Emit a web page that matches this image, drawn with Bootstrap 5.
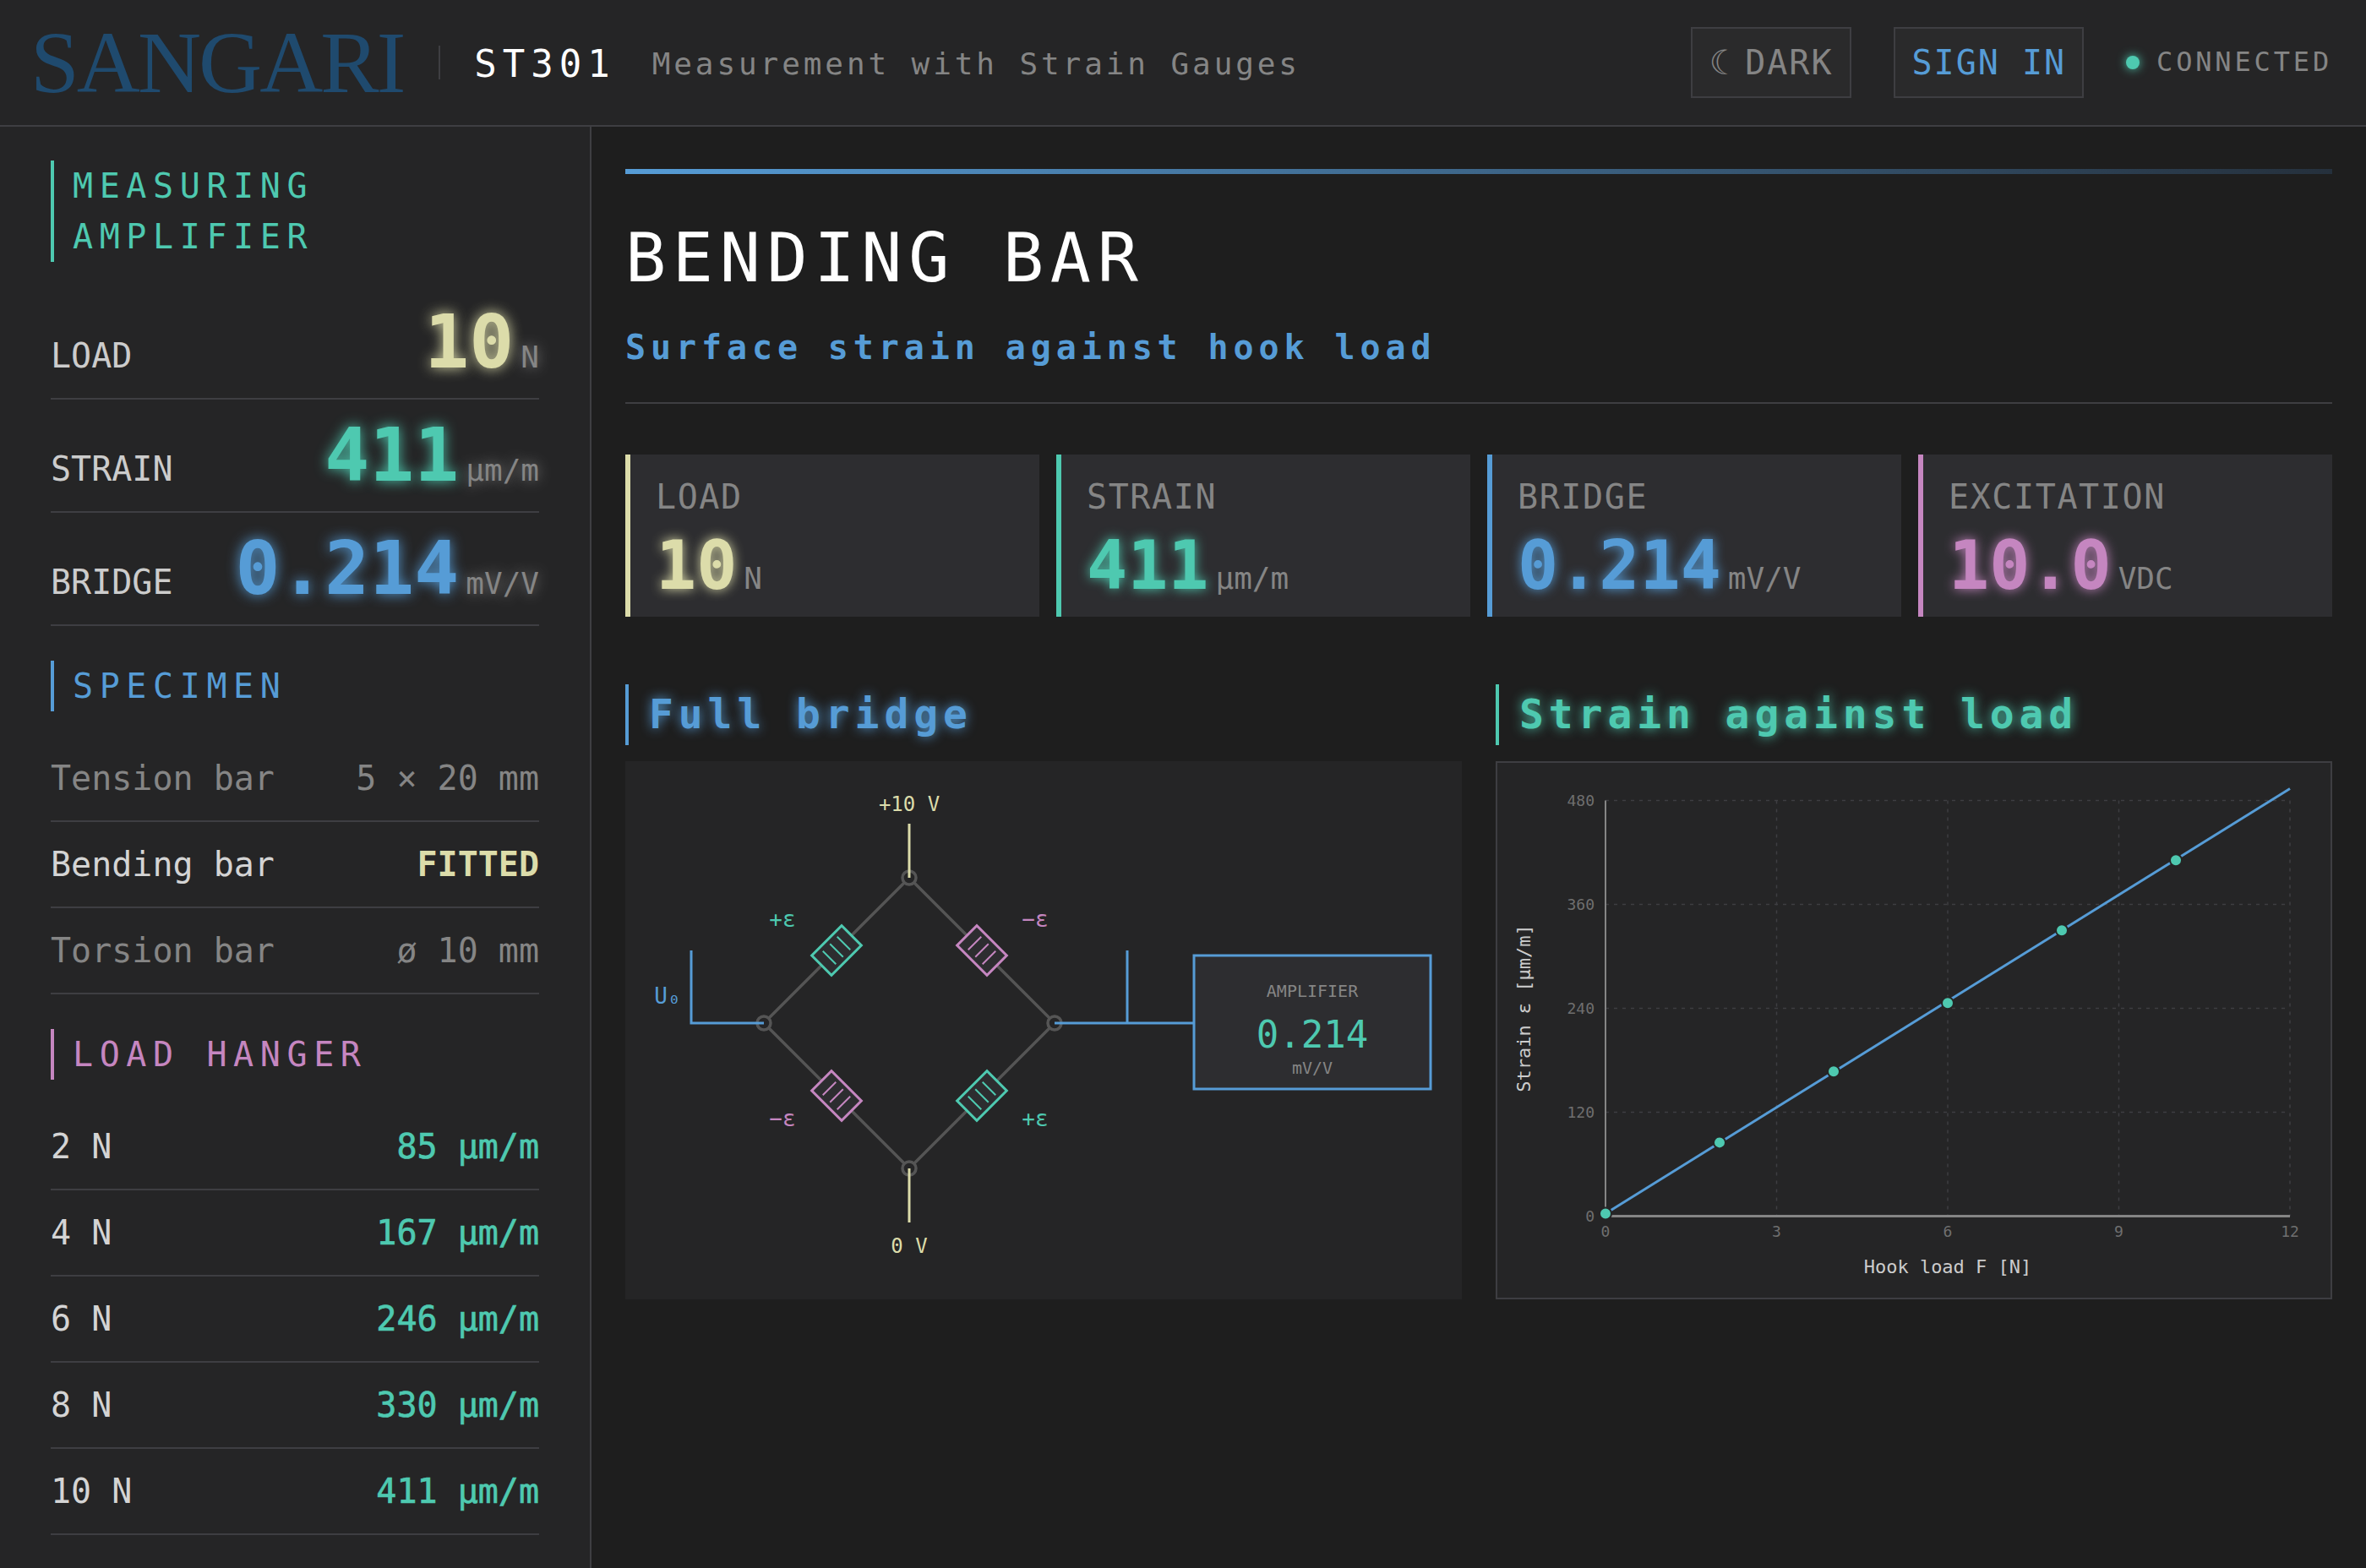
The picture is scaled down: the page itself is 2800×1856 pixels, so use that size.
<!DOCTYPE html>
<html lang="en">
  <head>
    <meta charset="utf-8" />
    <title>ST301 Measurement with Strain Gauges</title>
    <link href="https://cdn.jsdelivr.net/npm/bootstrap@5.3.3/dist/css/bootstrap.min.css" rel="stylesheet" />
    <script src="https://cdn.jsdelivr.net/npm/bootstrap@5.3.3/dist/js/bootstrap.bundle.min.js"></script>
    <style>
      :root {
        --teal: #4ec9b0;
        --blue: #569cd6;
        --yellow: #dcdcaa;
        --pink: #c586c0;
        --muted: #858585;
        --line: #3e3e42;
      }
      html, body { height: 100%; }
      body {
        background: #1e1e1e;
        color: #d4d4d4;
        font-family: "DejaVu Sans Mono", monospace;
        font-size: 40px;
      }
      .top-bar {
        height: 150px;
        background: #252526;
        border-bottom: 2px solid var(--line);
        padding: 0 40px 0 36px;
      }
      .brand-name {
        font-family: "Liberation Serif", serif;
        font-size: 104px;
        letter-spacing: -3px;
        line-height: 1;
        color: #1f4a6e;
      }
      .brand-rule { width: 2px; height: 40px; background: var(--line); margin: 0 40px 0 42px; }
      .code-name { font-size: 44px; letter-spacing: 7px; color: #fff; line-height: 1; margin-right: 43px; padding-top: 4px; }
      .sub-name { font-size: 36px; letter-spacing: 3.9px; color: var(--muted); line-height: 1; padding-top: 4px; }
      .bar-btn {
        height: 84px;
        border: 2px solid var(--line);
        border-radius: 0;
        background: #2a2a2b;
        color: var(--muted);
        font-size: 40px;
        letter-spacing: 2px;
        word-spacing: -10px;
        padding: 0 20px;
        line-height: 1;
      }
      .bar-btn.sign { color: var(--blue); margin-left: 50px; margin-right: 50px; word-spacing: 0; padding: 0 19px; }
      .live-dot { width: 16px; height: 16px; border-radius: 50%; background: var(--teal); box-shadow: 0 0 12px var(--teal); margin-right: 20px; }
      .live-text { font-size: 32px; letter-spacing: 3.84px; color: var(--muted); line-height: 1; padding-bottom: 3px; }

      .side-col {
        width: 700px;
        flex: none;
        background: #252526;
        border-right: 2px solid var(--line);
        padding: 40px 60px 0;
      }
      .side-head {
        border-left: 4px solid currentColor;
        padding-left: 22px;
        font-size: 40px;
        letter-spacing: 7.6px;
        line-height: 60px;
        margin-bottom: 29px;
        font-weight: 400;
      }
      .read-row {
        height: 134px;
        border-bottom: 2px solid var(--line);
        padding-top: 22px;
      }
      .read-label { color: #ccc; line-height: 60px; }
      .read-val { font-size: 88px; font-weight: 700; line-height: 88px; text-shadow: 0 0 16px currentColor; }
      .read-unit { font-size: 36px; font-weight: 400; color: var(--muted); margin-left: 8px; line-height: 1; }
      .info-row {
        border-bottom: 2px solid var(--line);
        padding: 20px 0;
        line-height: 60px;
      }
      .info-row.dim { color: var(--muted); }
      .hanger-val { color: var(--teal); -webkit-text-stroke: 0.7px var(--teal); }
      .side-group { margin-bottom: 41px; }

      .main-col { padding: 50px 40px 0; min-width: 0; }
      .top-rule { height: 6px; background: linear-gradient(90deg, var(--blue), #25303c); }
      .page-title { font-size: 80px; letter-spacing: 7.7px; color: #fff; line-height: 96px; margin: 52px 0 0; font-weight: 400; }
      .page-sub {
        font-size: 40px;
        letter-spacing: 5.9px;
        font-weight: 700;
        color: var(--blue);
        line-height: 60px;
        margin-top: 27px;
        padding-bottom: 35px;
        border-bottom: 2px solid var(--line);
        margin-bottom: 60px;
      }
      .stat-grid { grid-template-columns: repeat(4, 1fr); gap: 20px; margin-bottom: 80px; }
      .stat-box { height: 192px; background: #2d2d30; border-left: 6px solid currentColor; padding: 20px 30px; }
      .stat-label { color: var(--muted); letter-spacing: 1.6px; line-height: 60px; }
      .stat-val { font-size: 80px; font-weight: 700; line-height: 84px; margin-top: 10px; text-shadow: 0 0 14px currentColor; }
      .stat-unit { font-size: 36px; font-weight: 400; color: var(--muted); margin-left: 8px; text-shadow: none; }
      .panel-grid { grid-template-columns: 1fr 1fr; gap: 40px; }
      .panel-head {
        border-left: 4px solid currentColor;
        padding: 0 0 2px 24px;
        font-size: 48px;
        letter-spacing: 5.9px;
        font-weight: 700;
        line-height: 70px;
        margin: 0 0 19px;
        text-shadow: 0 0 14px currentColor;
      }
      .panel-box { height: 637px; background: #252526; }
      .panel-box.framed { border: 2px solid var(--line); }
      .panel-box svg { display: block; width: 100%; height: 100%; }
      .panel-box text { font-family: "DejaVu Sans Mono", monospace; }
    </style>
  </head>
  <body class="d-flex flex-column">
    <header class="top-bar d-flex align-items-center flex-none">
      <span class="brand-name">SANGARI</span>
      <span class="brand-rule"></span>
      <span class="code-name">ST301</span>
      <span class="sub-name">Measurement with Strain Gauges</span>
      <button type="button" class="btn bar-btn ms-auto">☾ DARK</button>
      <button type="button" class="btn bar-btn sign">SIGN IN</button>
      <span class="live-dot"></span>
      <span class="live-text">CONNECTED</span>
    </header>

    <div class="d-flex flex-grow-1">
      <aside class="side-col">
        <div class="side-group">
          <h2 class="side-head" style="color: var(--teal)">MEASURING<br />AMPLIFIER</h2>
          <div class="read-row d-flex justify-content-between align-items-baseline">
            <span class="read-label">LOAD</span>
            <span class="read-val" style="color: var(--yellow)">10<span class="read-unit">N</span></span>
          </div>
          <div class="read-row d-flex justify-content-between align-items-baseline">
            <span class="read-label">STRAIN</span>
            <span class="read-val" style="color: var(--teal)">411<span class="read-unit">µm/m</span></span>
          </div>
          <div class="read-row d-flex justify-content-between align-items-baseline">
            <span class="read-label">BRIDGE</span>
            <span class="read-val" style="color: var(--blue)">0.214<span class="read-unit">mV/V</span></span>
          </div>
        </div>
        <div class="side-group">
          <h2 class="side-head" style="color: var(--blue)">SPECIMEN</h2>
          <div class="info-row dim d-flex justify-content-between"><span>Tension bar</span><span>5 × 20 mm</span></div>
          <div class="info-row d-flex justify-content-between"><span>Bending bar</span><span class="fw-bold" style="color: var(--yellow)">FITTED</span></div>
          <div class="info-row dim d-flex justify-content-between"><span>Torsion bar</span><span>ø 10 mm</span></div>
        </div>
        <div>
          <h2 class="side-head" style="color: var(--pink)">LOAD HANGER</h2>
          <div class="info-row d-flex justify-content-between"><span>2 N</span><span class="hanger-val">85 µm/m</span></div>
          <div class="info-row d-flex justify-content-between"><span>4 N</span><span class="hanger-val">167 µm/m</span></div>
          <div class="info-row d-flex justify-content-between"><span>6 N</span><span class="hanger-val">246 µm/m</span></div>
          <div class="info-row d-flex justify-content-between"><span>8 N</span><span class="hanger-val">330 µm/m</span></div>
          <div class="info-row d-flex justify-content-between"><span>10 N</span><span class="hanger-val">411 µm/m</span></div>
        </div>
      </aside>

      <main class="main-col flex-grow-1">
        <div class="top-rule"></div>
        <h1 class="page-title">BENDING BAR</h1>
        <div class="page-sub">Surface strain against hook load</div>

        <div class="stat-grid d-grid">
          <div class="stat-box" style="color: var(--yellow)">
            <div class="stat-label">LOAD</div>
            <div class="stat-val">10<span class="stat-unit">N</span></div>
          </div>
          <div class="stat-box" style="color: var(--teal)">
            <div class="stat-label">STRAIN</div>
            <div class="stat-val">411<span class="stat-unit">µm/m</span></div>
          </div>
          <div class="stat-box" style="color: var(--blue)">
            <div class="stat-label">BRIDGE</div>
            <div class="stat-val">0.214<span class="stat-unit">mV/V</span></div>
          </div>
          <div class="stat-box" style="color: var(--pink)">
            <div class="stat-label">EXCITATION</div>
            <div class="stat-val">10.0<span class="stat-unit">VDC</span></div>
          </div>
        </div>

        <div class="panel-grid d-grid">
          <section>
            <h3 class="panel-head" style="color: var(--blue)">Full bridge</h3>
            <div class="panel-box">
              <svg viewBox="0 0 990 637">
                <g fill="none" stroke="#555" stroke-width="3.5">
                  <path d="M336 138 L164 310 L336 482 L508 310 Z" />
                  <circle cx="336" cy="138" r="8" fill="#252526" />
                  <circle cx="164" cy="310" r="8" fill="#252526" />
                  <circle cx="508" cy="310" r="8" fill="#252526" />
                  <circle cx="336" cy="482" r="8" fill="#252526" />
                </g>
                <g stroke="#dcdcaa" stroke-width="3">
                  <line x1="336" y1="74" x2="336" y2="138" />
                  <line x1="336" y1="482" x2="336" y2="546" />
                </g>
                <g fill="none" stroke="#569cd6" stroke-width="3">
                  <path d="M78 224 V310 H164" />
                  <path d="M508 310 H672" />
                  <path d="M594 224 V310" />
                  <rect x="673" y="230" width="280" height="158" fill="#2d2d30" />
                </g>
                <g fill="#2d2d30" stroke="#4ec9b0" transform="translate(250 224) rotate(-45)">
                  <rect x="-25" y="-16.5" width="50" height="33" stroke-width="3" />
                  <path d="M-12 -11 V11 M0 -11 V11 M12 -11 V11" stroke-width="2" />
                </g>
                <g fill="#2d2d30" stroke="#c586c0" transform="translate(422 224) rotate(45)">
                  <rect x="-25" y="-16.5" width="50" height="33" stroke-width="3" />
                  <path d="M-12 -11 V11 M0 -11 V11 M12 -11 V11" stroke-width="2" />
                </g>
                <g fill="#2d2d30" stroke="#c586c0" transform="translate(250 396) rotate(45)">
                  <rect x="-25" y="-16.5" width="50" height="33" stroke-width="3" />
                  <path d="M-12 -11 V11 M0 -11 V11 M12 -11 V11" stroke-width="2" />
                </g>
                <g fill="#2d2d30" stroke="#4ec9b0" transform="translate(422 396) rotate(-45)">
                  <rect x="-25" y="-16.5" width="50" height="33" stroke-width="3" />
                  <path d="M-12 -11 V11 M0 -11 V11 M12 -11 V11" stroke-width="2" />
                </g>
                <g text-anchor="middle" font-size="24">
                  <text x="336" y="59" fill="#dcdcaa">+10 V</text>
                  <text x="336" y="582" fill="#dcdcaa">0 V</text>
                  <text x="186" y="196" font-size="26" fill="#4ec9b0">+ε</text>
                  <text x="485" y="196" font-size="26" fill="#c586c0">−ε</text>
                  <text x="186" y="432" font-size="26" fill="#c586c0">−ε</text>
                  <text x="485" y="432" font-size="26" fill="#4ec9b0">+ε</text>
                  <text x="50" y="287" font-size="26" fill="#569cd6">U₀</text>
                  <text x="813" y="278.5" font-size="20" fill="#858585">AMPLIFIER</text>
                  <text x="813" y="338.5" font-size="44" fill="#4ec9b0">0.214</text>
                  <text x="813" y="369.5" font-size="20" fill="#858585">mV/V</text>
                </g>
              </svg>
            </div>
          </section>
          <section>
            <h3 class="panel-head" style="color: var(--teal)">Strain against load</h3>
            <div class="panel-box framed">
              <svg viewBox="2 3.5 986 633" id="chart">
                <g id="chart-grid" stroke="#3e3e42" stroke-width="1.5" stroke-dasharray="4 6"></g>
                <line x1="130" y1="48" x2="130" y2="540" stroke="#858585" stroke-width="2" />
                <line x1="130" y1="540" x2="940" y2="540" stroke="#858585" stroke-width="3" />
                <line x1="130" y1="537" x2="940" y2="34" stroke="#569cd6" stroke-width="3" />
                <g id="chart-dots" fill="#4ec9b0" stroke="#252526" stroke-width="2"></g>
                <g id="chart-ticks" font-size="18" fill="#6f6f6f"></g>
                <text x="535" y="607" text-anchor="middle" font-size="22" fill="#cccccc">Hook load F [N]</text>
                <text transform="translate(41 294) rotate(-90)" text-anchor="middle" font-size="22" fill="#cccccc">Strain ε [µm/m]</text>
              </svg>
            </div>
          </section>
        </div>
      </main>
    </div>

    <script>
      const NS = "http://www.w3.org/2000/svg";
      function add(parentId, tag, attrs, label) {
        const el = document.createElementNS(NS, tag);
        for (const key in attrs) el.setAttribute(key, attrs[key]);
        if (label !== undefined) el.textContent = label;
        document.getElementById(parentId).appendChild(el);
      }
      const xOf = (f) => 130 + (f / 12) * 810;
      const yOf = (s) => 540 - (s / 480) * 492;
      for (const f of [0, 3, 6, 9, 12]) {
        if (f > 0) add("chart-grid", "line", { x1: xOf(f), x2: xOf(f), y1: 48, y2: 540 });
        add("chart-ticks", "text", { x: xOf(f), y: 564, "text-anchor": "middle" }, f);
      }
      for (const s of [0, 120, 240, 360, 480]) {
        if (s > 0) add("chart-grid", "line", { x1: 130, x2: 940, y1: yOf(s), y2: yOf(s) });
        add("chart-ticks", "text", { x: 117, y: yOf(s) + 6, "text-anchor": "end" }, s);
      }
      const points = [[0, 3], [2, 85], [4, 167], [6, 246], [8, 330], [10, 411]];
      for (const p of points) add("chart-dots", "circle", { cx: xOf(p[0]), cy: yOf(p[1]), r: 7 });
    </script>
  </body>
</html>
